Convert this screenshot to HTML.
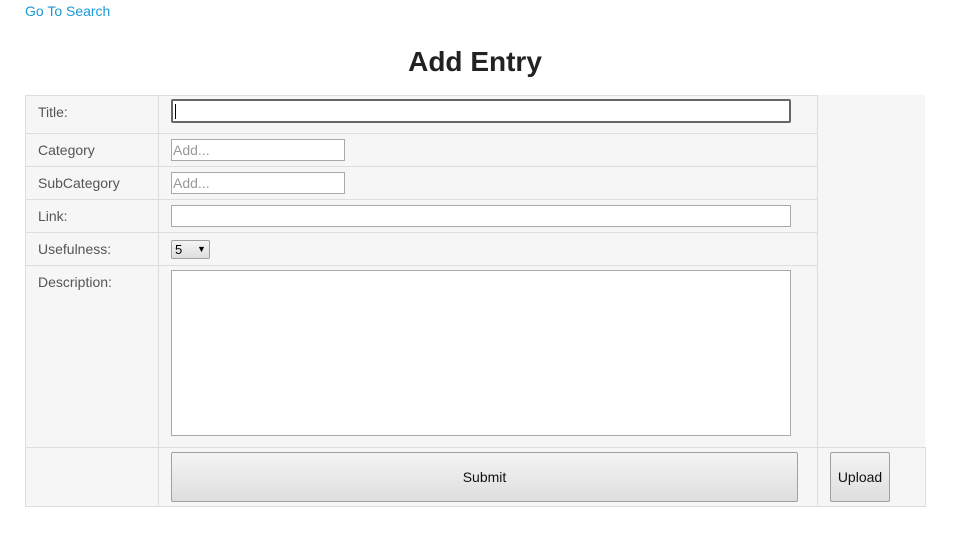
<!DOCTYPE html>
<html><head><style>
body{margin:0;width:977px;height:552px;background:#fff;font-family:"Liberation Sans",sans-serif;position:relative;overflow:hidden}
.a{position:absolute;box-sizing:border-box}
.l{position:absolute;left:38px;font-size:14px;color:#555;line-height:16px}
.bg{background:#f6f6f6}
.h{position:absolute;height:1px;background:#ddd}
.v{position:absolute;width:1px;background:#ddd}
.in{position:absolute;box-sizing:border-box;background:#fff;border:1px solid #a9a9a9}
.ph{font-size:14px;color:#999;padding:2px 0 0 1px;line-height:16px}
.btn{position:absolute;box-sizing:border-box;border:1px solid #a0a0a0;border-radius:2px;background:linear-gradient(#f4f4f4,#dedede);font-size:14px;color:#111;display:flex;align-items:center;justify-content:center}
</style></head><body>
<div class="a" style="left:25px;top:3px;font-size:14px;color:#1a9ad6;line-height:16px">Go To Search</div>
<div class="a" style="left:0;width:950px;top:46px;text-align:center;font-size:28px;font-weight:bold;color:#222;line-height:32px">Add Entry</div>
<div class="a bg" style="left:25px;top:95px;width:900px;height:411px"></div>
<div class="h" style="left:25px;top:95px;width:793px"></div>
<div class="h" style="left:25px;top:133px;width:793px"></div>
<div class="h" style="left:25px;top:166px;width:793px"></div>
<div class="h" style="left:25px;top:199px;width:793px"></div>
<div class="h" style="left:25px;top:232px;width:793px"></div>
<div class="h" style="left:25px;top:265px;width:793px"></div>
<div class="h" style="left:25px;top:447px;width:901px"></div>
<div class="h" style="left:25px;top:506px;width:901px"></div>
<div class="v" style="left:25px;top:95px;height:412px"></div>
<div class="v" style="left:158px;top:95px;height:412px"></div>
<div class="v" style="left:817px;top:95px;height:412px"></div>
<div class="v" style="left:925px;top:447px;height:60px"></div>
<div class="l" style="top:104px">Title:</div>
<div class="l" style="top:142px">Category</div>
<div class="l" style="top:175px">SubCategory</div>
<div class="l" style="top:208px">Link:</div>
<div class="l" style="top:241px">Usefulness:</div>
<div class="l" style="top:274px">Description:</div>
<div class="in" style="left:171px;top:99px;width:620px;height:24px;border:2px solid #666;border-radius:2px"><div style="position:absolute;left:2px;top:3px;width:1px;height:15px;background:#000"></div></div>
<div class="in ph" style="left:171px;top:139px;width:174px;height:22px">Add...</div>
<div class="in ph" style="left:171px;top:172px;width:174px;height:22px">Add...</div>
<div class="in" style="left:171px;top:205px;width:620px;height:22px"></div>
<div class="a" style="left:171px;top:240px;width:39px;height:19px;border:1px solid #a0a0a0;border-radius:2px;background:linear-gradient(#f4f4f4,#dedede);font-size:13px;line-height:17px;padding-left:3px">5<span style="position:absolute;left:25px;top:0;font-size:9px">▼</span></div>
<div class="in" style="left:171px;top:270px;width:620px;height:166px"></div>
<div class="btn" style="left:171px;top:452px;width:627px;height:50px">Submit</div>
<div class="btn" style="left:830px;top:452px;width:60px;height:50px">Upload</div>
</body></html>
